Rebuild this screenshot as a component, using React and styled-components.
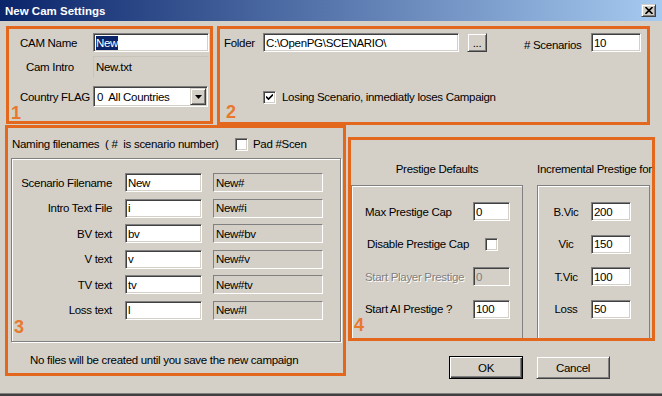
import React from 'react';
import styled, { createGlobalStyle, css } from 'styled-components';

const FACE = '#d4d0c8';
const ORANGE = '#e3681d';
const UI_FONT = '"Liberation Sans", Arial, sans-serif';

const GlobalStyle = createGlobalStyle`
  html, body {
    margin: 0;
    padding: 0;
    background: ${FACE};
  }
  body {
    font-family: ${UI_FONT};
    font-size: 11.5px;
    letter-spacing: -0.3px;
    line-height: 14px;
    color: #000;
  }
`;

const sunken = css`
  box-sizing: border-box;
  border: 1px solid;
  border-color: #808080 #fff #fff #808080;
  box-shadow: inset 1px 1px 0 #404040, inset -1px -1px 0 ${FACE};
`;

const raised = css`
  box-sizing: border-box;
  border: 1px solid;
  border-color: ${FACE} #404040 #404040 ${FACE};
  box-shadow: inset 1px 1px 0 #fff, inset -1px -1px 0 #808080;
  background: ${FACE};
`;

const Window = styled.div`
  width: 662px;
  height: 396px;
  box-sizing: border-box;
  background: ${FACE};
  border-bottom: 2px solid #404040;
  box-shadow: inset 0 -1px 0 #808080;
  overflow: hidden;
`;

const TitleBar = styled.div`
  height: 21px;
  display: flex;
  align-items: center;
  justify-content: space-between;
  padding: 0 6px 0 5px;
  background: linear-gradient(to right, #0a246a, #a6caf0);
`;

const Title = styled.span`
  font: bold 11.5px "Liberation Sans", Arial, sans-serif;
  letter-spacing: 0;
  color: #fff;
`;

const CloseButton = styled.span`
  ${raised};
  width: 15px;
  height: 13px;
  display: flex;
  align-items: center;
  justify-content: center;
`;

const TopRow = styled.div`
  display: flex;
  align-items: flex-start;
  gap: 4px;
  margin: 5px 0 0 6px;
`;

const BottomRow = styled.div`
  display: flex;
  align-items: flex-start;
  margin-left: 5px;
`;

const RightSide = styled.div`
  margin: 12px 0 0 2px;
`;

const Note = styled.section`
  position: relative;
  flex-shrink: 0;
  box-sizing: border-box;
  width: ${(p) => p.$w}px;
  height: ${(p) => p.$h}px;
  border: 3px solid ${ORANGE};
`;

const NoteNumber = styled.span`
  position: absolute;
  left: ${(p) => p.$x}px;
  top: ${(p) => p.$y}px;
  font: bold 18px/1 "Liberation Sans", Arial, sans-serif;
  letter-spacing: 0;
  color: #e8782c;
`;

const Stack = styled.div`
  display: flex;
  flex-direction: column;
  padding: ${(p) => p.$pt || 0}px 0 0 ${(p) => p.$pl || 0}px;
`;

const Row = styled.div`
  display: flex;
  align-items: center;
  margin-top: ${(p) => p.$mt || 0}px;
  padding-left: ${(p) => p.$pl || 0}px;
`;

const Label = styled.span`
  flex-shrink: 0;
  box-sizing: border-box;
  width: ${(p) => (p.$w ? `${p.$w}px` : 'auto')};
  margin-left: ${(p) => p.$ml || 0}px;
  padding-left: ${(p) => p.$indent || 0}px;
  padding-top: ${(p) => p.$drop || 0}px;
  text-align: ${(p) => p.$align || 'left'};
  white-space: pre;
  color: ${(p) => (p.$disabled ? '#808080' : '#000')};
  text-shadow: ${(p) => (p.$disabled ? '1px 1px 0 #fff' : 'none')};
`;

const TextBox = styled.div`
  ${sunken};
  flex-shrink: 0;
  width: ${(p) => p.$w}px;
  height: ${(p) => p.$h || 19}px;
  padding: 0 2px;
  display: flex;
  align-items: center;
  white-space: pre;
  overflow: hidden;
  background: ${(p) => (p.$disabled ? FACE : '#fff')};
  color: ${(p) => (p.$disabled ? '#808080' : '#000')};
`;

const Selected = styled.span`
  background: #0a246a;
  color: #fff;
`;

const Static = styled.div`
  flex-shrink: 0;
  box-sizing: border-box;
  width: ${(p) => p.$w}px;
  height: ${(p) => p.$h || 19}px;
  margin-left: ${(p) => p.$ml || 0}px;
  padding-left: 2px;
  display: flex;
  align-items: center;
  border: 1px solid;
  border-color: ${(p) => (p.$flat ? `#c8c4bc ${FACE} ${FACE} #c8c4bc` : '#808080 #fff #fff #808080')};
`;

const Combo = styled.div`
  ${sunken};
  flex-shrink: 0;
  width: ${(p) => p.$w}px;
  height: 21px;
  padding: 1px 1px 1px 3px;
  display: flex;
  align-items: center;
  background: #fff;
  white-space: pre;
`;

const ComboText = styled.span`
  flex: 1;
`;

const DropButton = styled.span`
  ${raised};
  width: 16px;
  height: 17px;
  display: flex;
  align-items: center;
  justify-content: center;
`;

const PushButton = styled.button`
  ${raised};
  flex-shrink: 0;
  width: ${(p) => p.$w}px;
  height: ${(p) => p.$h}px;
  margin-left: ${(p) => p.$ml || 0}px;
  padding: 0;
  font: 11.5px ${UI_FONT};
  letter-spacing: -0.3px;
  color: #000;
  ${(p) =>
    p.$default &&
    css`
      border-color: #000;
      box-shadow: inset 1px 1px 0 #fff, inset -1px -1px 0 #404040, inset -2px -2px 0 #808080;
    `}
`;

const Box = styled.span`
  ${sunken};
  flex-shrink: 0;
  width: 13px;
  height: 13px;
  background: #fff;
  display: flex;
  align-items: center;
  justify-content: center;
`;

const CheckText = styled.span`
  margin-left: ${(p) => p.$ml || 6}px;
  white-space: pre;
`;

const Group = styled.div`
  box-sizing: border-box;
  width: ${(p) => p.$w}px;
  height: ${(p) => p.$h}px;
  margin: ${(p) => p.$mt}px 0 0 ${(p) => p.$ml}px;
  padding-top: 14px;
  border: 1px solid #808080;
  box-shadow: inset 1px 1px 0 #fff, 1px 1px 0 #fff;
  display: flex;
  flex-direction: column;
  gap: 6.6px;
`;

const NameRow = styled.div`
  display: flex;
  align-items: center;
  height: 19px;
`;

const Footer = styled.p`
  margin: 11px 0 0 22px;
`;

const Columns = styled.div`
  display: flex;
  gap: 14px;
  height: 100%;
`;

const Column = styled.div`
  display: flex;
  flex-direction: column;
  width: ${(p) => p.$w}px;
`;

const ColumnHead = styled.div`
  padding-top: 22px;
  height: 14px;
  text-align: center;
  white-space: nowrap;
`;

const OpenGroup = styled.div`
  flex: 1;
  margin-top: 9px;
  padding: 16px 0 0 ${(p) => p.$pl}px;
  border: 1px solid #808080;
  border-bottom: none;
  box-shadow: inset 1px 1px 0 #fff;
  display: flex;
  flex-direction: column;
  gap: 13.5px;
`;

const ValueRow = styled.div`
  display: flex;
  align-items: center;
  height: 19px;
`;

const ButtonRow = styled.div`
  display: flex;
  gap: 13px;
  margin-top: 15px;
  padding-left: 101px;
`;

function CheckBox({ checked }) {
  return (
    <Box>
      {checked && (
        <svg width="7" height="7" viewBox="0 0 7 7">
          <path d="M0 2.5 L2.5 5 L7 0.5" fill="none" stroke="#000" strokeWidth="1.6" />
        </svg>
      )}
    </Box>
  );
}

const names = [
  ['Scenario Filename', 'New', 'New#'],
  ['Intro Text File', 'i', 'New#i'],
  ['BV text', 'bv', 'New#bv'],
  ['V text', 'v', 'New#v'],
  ['TV text', 'tv', 'New#tv'],
  ['Loss text', 'l', 'New#l'],
];

const increments = [
  ['B.Vic', '200'],
  ['Vic', '150'],
  ['T.Vic', '100'],
  ['Loss', '50'],
];

export default function App() {
  return (
    <>
      <GlobalStyle />
      <Window>
        <TitleBar>
          <Title>New Cam Settings</Title>
          <CloseButton>
            <svg width="8" height="7" viewBox="0 0 8 7">
              <path d="M0.5 0 L7.5 7 M7.5 0 L0.5 7" stroke="#000" strokeWidth="1.6" />
            </svg>
          </CloseButton>
        </TitleBar>

        <TopRow>
          <Note $w={207} $h={98}>
            <Stack $pt={4} $pl={11}>
              <Row>
                <Label $w={73}>CAM Name</Label>
                <TextBox $w={116}>
                  <Selected>New</Selected>
                </TextBox>
              </Row>
              <Row $mt={4}>
                <Label $w={73} $indent={6}>Cam Intro</Label>
                <Static $w={116} $h={22} $flat>New.txt</Static>
              </Row>
              <Row $mt={8}>
                <Label $w={73}>Country FLAG</Label>
                <Combo $w={115}>
                  <ComboText>0  All Countries</ComboText>
                  <DropButton>
                    <svg width="7" height="4" viewBox="0 0 7 4">
                      <path d="M0 0 H7 L3.5 4 Z" fill="#000" />
                    </svg>
                  </DropButton>
                </Combo>
              </Row>
            </Stack>
            <NoteNumber $x={2} $y={75}>1</NoteNumber>
          </Note>

          <Note $w={433} $h={99}>
            <Stack $pt={4} $pl={4}>
              <Row>
                <Label $w={39}>Folder</Label>
                <TextBox $w={196}>C:\OpenPG\SCENARIO\</TextBox>
                <PushButton $w={20} $h={19} $ml={8}>...</PushButton>
                <Label $w={67} $ml={37} $drop={4}># Scenarios</Label>
                <TextBox $w={50}>10</TextBox>
              </Row>
              <Row $mt={38} $pl={39}>
                <CheckBox checked />
                <CheckText>Losing Scenario, inmediatly loses Campaign</CheckText>
              </Row>
            </Stack>
            <NoteNumber $x={6} $y={74}>2</NoteNumber>
          </Note>
        </TopRow>

        <BottomRow>
          <Note $w={341} $h={251}>
            <Row $mt={9} $pl={4}>
              <Label $w={223}>Naming filenames  ( #  is scenario number)</Label>
              <CheckBox />
              <CheckText $ml={5}>Pad #Scen</CheckText>
            </Row>
            <Group $w={330} $h={184} $mt={7} $ml={3}>
              {names.map(([label, value, result]) => (
                <NameRow key={label}>
                  <Label $w={100} $align="right">{label}</Label>
                  <Label $w={13} />
                  <TextBox $w={77}>{value}</TextBox>
                  <Static $w={110} $ml={11}>{result}</Static>
                </NameRow>
              ))}
            </Group>
            <Footer>No files will be created until you save the new campaign</Footer>
            <NoteNumber $x={6} $y={190}>3</NoteNumber>
          </Note>

          <RightSide>
            <Note $w={307} $h={204}>
              <Columns>
                <Column $w={172}>
                  <ColumnHead>Prestige Defaults</ColumnHead>
                  <OpenGroup $pl={13}>
                    <ValueRow>
                      <Label $w={108}>Max Prestige Cap</Label>
                      <TextBox $w={37}>0</TextBox>
                    </ValueRow>
                    <ValueRow>
                      <Label $w={120} $indent={2}>Disable Prestige Cap</Label>
                      <CheckBox />
                    </ValueRow>
                    <ValueRow>
                      <Label $w={108} $disabled>Start Player Prestige</Label>
                      <TextBox $w={37} $disabled>0</TextBox>
                    </ValueRow>
                    <ValueRow>
                      <Label $w={108}>Start AI Prestige ?</Label>
                      <TextBox $w={37}>100</TextBox>
                    </ValueRow>
                  </OpenGroup>
                </Column>
                <Column $w={113}>
                  <ColumnHead>Incremental Prestige for</ColumnHead>
                  <OpenGroup $pl={3}>
                    {increments.map(([label, value]) => (
                      <ValueRow key={label}>
                        <Label $w={50} $align="center">{label}</Label>
                        <TextBox $w={40}>{value}</TextBox>
                      </ValueRow>
                    ))}
                  </OpenGroup>
                </Column>
              </Columns>
              <NoteNumber $x={3} $y={176}>4</NoteNumber>
            </Note>
            <ButtonRow>
              <PushButton $w={74} $h={23} $default>OK</PushButton>
              <PushButton $w={74} $h={23}>Cancel</PushButton>
            </ButtonRow>
          </RightSide>
        </BottomRow>
      </Window>
    </>
  );
}
